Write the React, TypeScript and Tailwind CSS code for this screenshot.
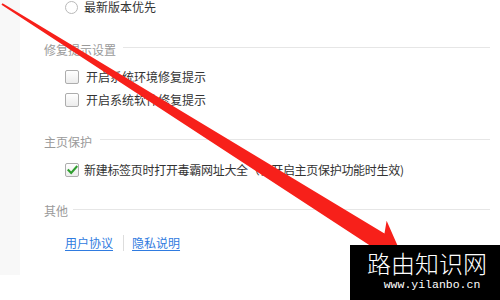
import React from "react";

const font = { fontFamily: '"Noto Sans CJK SC", "Noto Sans", sans-serif' };

function Checkbox({ checked = false }: { checked?: boolean }) {
  return (
    <div className="w-[14px] h-[14px] rounded-[2px] border border-[#adadad] bg-gradient-to-b from-white to-[#ececec] flex items-center justify-center shrink-0">
      {checked && (
        <svg width="11" height="10" viewBox="0 0 11 10">
          <path d="M1.5 5.2 L4.2 8 L9.6 1.8" fill="none" stroke="#2f9e2f" strokeWidth="2.1" strokeLinecap="square" />
        </svg>
      )}
    </div>
  );
}

function Header({ label, gap }: { label: string; gap: string }) {
  return (
    <div className={`flex h-[20px] ${gap}`}>
      <span className="text-[12px] leading-[20px] text-[#9a9a9a] shrink-0">{label}</span>
      <div className="flex-1 h-px bg-[#e6e6e6] mt-[7px] mr-[10px]" />
    </div>
  );
}

export default function App() {
  return (
    <div className="relative w-[500px] h-[300px] bg-white overflow-hidden" style={font}>
      <div className="flex">
        <div className="w-[20px] h-[275px] bg-[#f8f8f8] shrink-0" />
        <div className="flex-1 pl-[24px] flex flex-col">
          {/* radio row */}
          <div className="flex items-center h-[14px] pl-[21px] gap-[6px]">
            <div className="w-[13px] h-[13px] rounded-full border border-[#b9b9b9] bg-white shrink-0" />
            <span className="text-[12px] leading-[14px] text-[#333]">最新版本优先</span>
          </div>

          <div className="mt-[26px]">
            <Header label="修复提示设置" gap="gap-[7px]" />
          </div>

          <div className="mt-[10px] flex items-center h-[14px] pl-[21px] gap-[7px]">
            <Checkbox />
            <span className="text-[12px] leading-[14px] text-[#333]">开启系统环境修复提示</span>
          </div>
          <div className="mt-[9px] flex items-center h-[14px] pl-[21px] gap-[7px]">
            <Checkbox />
            <span className="text-[12px] leading-[14px] text-[#333]">开启系统软件修复提示</span>
          </div>

          <div className="mt-[25px]">
            <Header label="主页保护" gap="gap-[8px]" />
          </div>

          <div className="mt-[11px] flex items-center h-[14px] pl-[21px] gap-[5px]">
            <Checkbox checked />
            <span className="text-[12px] leading-[14px] text-[#333] whitespace-nowrap tracking-[-0.3px]">新建标签页时打开毒霸网址大全（在开启主页保护功能时生效)</span>
          </div>

          <div className="mt-[24px]">
            <div className="flex h-[20px] gap-[5px]">
              <span className="text-[12px] leading-[20px] text-[#9a9a9a] shrink-0">其他</span>
              <div className="flex-1 h-px bg-[#e6e6e6] mt-[8px] mr-[10px]" />
            </div>
          </div>

          <div className="mt-[13px] flex items-center h-[18px] pl-[21px]">
            <span className="text-[12px] leading-[18px] text-[#2f7be0] underline underline-offset-2">用户协议</span>
            <div className="w-px h-[16px] bg-[#dddddd] ml-[10px] mr-[8px]" />
            <span className="text-[12px] leading-[18px] text-[#2f7be0] underline underline-offset-2">隐私说明</span>
          </div>
        </div>
      </div>

      {/* red arrow annotation */}
      <svg className="absolute left-0 top-0 pointer-events-none" width="500" height="300" viewBox="0 0 500 300">
        <g transform="translate(2,4) rotate(32.13)">
          <polygon
            points="0,-1 446,-9 441,-21 472,0 441,21 446,9 0,1"
            fill="#f7201a"
          />
        </g>
      </svg>

      {/* watermark */}
      <div className="absolute left-[350px] top-[245px] w-[150px] h-[55px] bg-black flex flex-col items-center">
        <span className="text-[24px] leading-[26px] text-white mt-[5px] ml-[4px] font-light" style={font}>路由知识网</span>
        <span className="text-[11.5px] leading-[13px] text-white mt-[2px] ml-[14px]" style={{ fontFamily: '"Liberation Mono", monospace' }}>www.yilanbo.cn</span>
      </div>
    </div>
  );
}
